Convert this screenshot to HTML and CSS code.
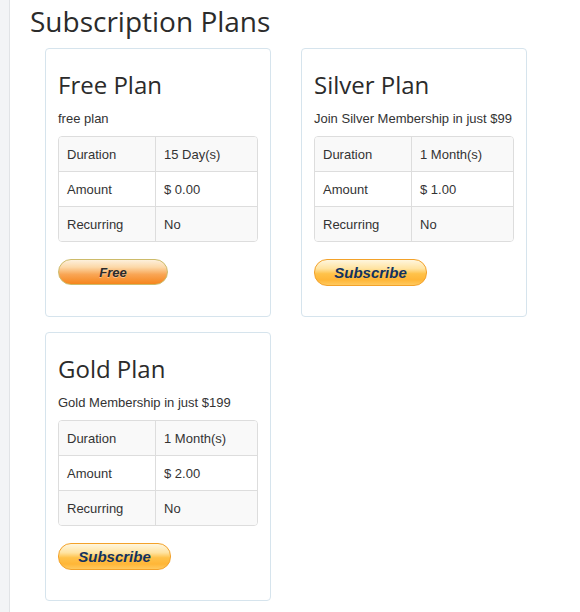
FILE: index.html
```html
<!DOCTYPE html>
<html>
<head>
<meta charset="utf-8">
<link rel="stylesheet" href="styles.css">
</head>
<body>
<div class="page">
  <div class="rail"></div>
  <main class="main">
    <h1 class="title">Subscription Plans</h1>
    <div class="plans">
      <div class="card">
        <h3 class="card-title">Free Plan</h3>
        <p class="desc">free plan</p>
        <table class="info">
          <tr class="odd"><td class="k">Duration</td><td>15 Day(s)</td></tr>
          <tr><td class="k">Amount</td><td>$ 0.00</td></tr>
          <tr class="odd"><td class="k">Recurring</td><td>No</td></tr>
        </table>
        <span class="btn btn-free">Free</span>
      </div>
      <div class="card">
        <h3 class="card-title">Silver Plan</h3>
        <p class="desc">Join Silver Membership in just $99</p>
        <table class="info">
          <tr class="odd"><td class="k">Duration</td><td>1 Month(s)</td></tr>
          <tr><td class="k">Amount</td><td>$ 1.00</td></tr>
          <tr class="odd"><td class="k">Recurring</td><td>No</td></tr>
        </table>
        <span class="btn btn-sub">Subscribe</span>
      </div>
      <div class="card">
        <h3 class="card-title">Gold Plan</h3>
        <p class="desc">Gold Membership in just $199</p>
        <table class="info">
          <tr class="odd"><td class="k">Duration</td><td>1 Month(s)</td></tr>
          <tr><td class="k">Amount</td><td>$ 2.00</td></tr>
          <tr class="odd"><td class="k">Recurring</td><td>No</td></tr>
        </table>
        <span class="btn btn-sub">Subscribe</span>
      </div>
    </div>
  </main>
</div>
</body>
</html>
```

FILE: styles.css
```css
html, body {
  margin: 0;
  padding: 0;
  background: #fff;
}
.page {
  display: flex;
  min-height: 612px;
}
.rail {
  width: 9px;
  flex: none;
  background: #f3f4f6;
  border-right: 1px solid #e1e3e6;
}
.main {
  flex: 1;
  padding-left: 20px;
}
.title {
  font-family: "Open Sans", sans-serif;
  font-weight: 400;
  font-size: 28px;
  line-height: 1.1;
  color: #2b2b2b;
  margin: 6px 0 0 0;
}
.plans {
  display: grid;
  grid-template-columns: 226px 226px;
  column-gap: 30px;
  row-gap: 15px;
  margin-left: 15px;
  margin-top: 11px;
}
.card {
  border: 1px solid #d6e4ed;
  border-radius: 4px;
  padding: 23px 12px 30px 12px;
  box-sizing: border-box;
  height: 269px;
}
.card-title {
  font-family: "Open Sans", sans-serif;
  font-weight: 400;
  font-size: 24px;
  line-height: 1.1;
  color: #2b2b2b;
  margin: 0;
}
.desc {
  font-family: "Liberation Sans", Arial, sans-serif;
  font-size: 13px;
  line-height: 18px;
  color: #333;
  margin: 12px 0 8px 0;
}
.info {
  width: 200px;
  border-collapse: separate;
  border-spacing: 0;
  border: 1px solid #ddd;
  border-radius: 4px;
  font-family: "Liberation Sans", Arial, sans-serif;
  font-size: 13px;
  color: #333;
}
.info td {
  height: 34px;
  padding: 0 8px;
  box-sizing: border-box;
}
.info tr + tr td {
  border-top: 1px solid #ddd;
  height: 35px;
}
.info td.k {
  width: 97px;
  border-right: 1px solid #ddd;
}
.info tr.odd td {
  background: #f9f9f9;
}
.info tr:first-child td:first-child { border-top-left-radius: 3px; }
.info tr:first-child td:last-child { border-top-right-radius: 3px; }
.info tr:last-child td:first-child { border-bottom-left-radius: 3px; }
.info tr:last-child td:last-child { border-bottom-right-radius: 3px; }
.btn {
  display: flex;
  align-items: center;
  justify-content: center;
  margin-top: 18px;
  box-sizing: border-box;
  font-family: "Liberation Sans", Arial, sans-serif;
  font-weight: 700;
  font-style: italic;
}
.btn-free {
  width: 110px;
  height: 26px;
  margin-top: 17px;
  border-radius: 13px;
  border: 1px solid #cdbb6a;
  background: linear-gradient(to bottom, #fdf0dc 0%, #fcd8a8 30%, #f9a655 60%, #f6851c 100%);
  font-size: 13px;
  color: #2a2a2a;
  text-shadow: 0 1px 0 rgba(255,255,255,0.4);
}
.btn-sub {
  width: 113px;
  height: 27px;
  margin-top: 17px;
  border-radius: 13px;
  border: 1px solid #f3a22a;
  background: linear-gradient(to bottom, #fff6de 0%, #ffe3a0 35%, #ffc24a 55%, #ffb637 80%, #ffc95e 100%);
  font-size: 15px;
  color: #12325f;
}
```
